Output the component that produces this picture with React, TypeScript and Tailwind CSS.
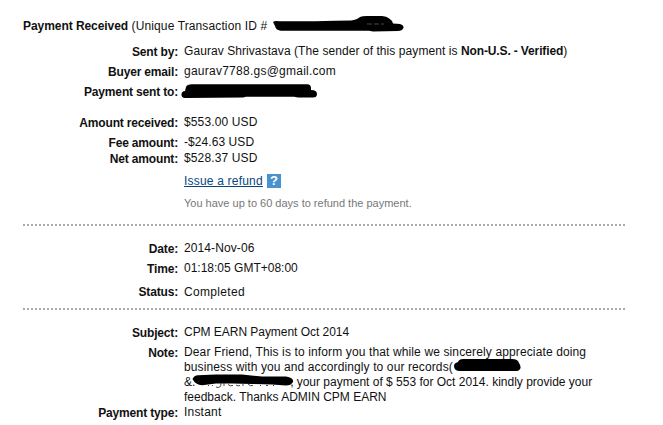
import type { ReactNode } from "react";

type RowProps = {
  label: string;
  className: string;
  labelClassName?: string;
  children: ReactNode;
};

function Row({ label, className, labelClassName = "pt-px", children }: RowProps) {
  return (
    <div className={`flex ${className}`}>
      <dt
        className={`w-[155px] shrink-0 text-right font-bold tracking-[-0.17px] ${labelClassName}`}
      >
        {label}
      </dt>
      <dd className="ml-[6px] min-h-[15px]">{children}</dd>
    </div>
  );
}

function Divider({ className }: { className: string }) {
  return (
    <div
      className={`h-[2px] w-[602px] bg-[repeating-linear-gradient(90deg,#aaaaaa_0_2px,transparent_2px_4px)] ${className}`}
    />
  );
}

type MarkerProps = {
  d: string;
  className: string;
  children?: ReactNode;
};

// Marker stroke drawn over private details
function Marker({ d, className, children }: MarkerProps) {
  return (
    <svg className={`absolute overflow-visible ${className}`} fill="#000">
      <path d={d} />
      {children}
    </svg>
  );
}

export default function App() {
  return (
    <main className="h-[425px] w-[663px] overflow-hidden bg-white pl-[23px] pt-[19px] font-['Liberation_Sans',Arial,sans-serif] text-[12px] leading-[15px] whitespace-nowrap text-[#111]">
      <h1 className="relative h-[15px]">
        <strong className="tracking-[-0.06px]">Payment Received</strong>
        <span className="tracking-[0.12px]"> (Unique Transaction ID #</span>
        <Marker
          className="top-[-3px] left-[250px] h-[18px] w-[132px]"
          d="M0 6Q2 4.5 6 5.3L42 5.2L62 4.7L78 4.4Q84 3.8 87 1Q89 0 94 0L109 0Q118 1 120 7.5L127 8Q131 9 130.500 12Q129 15 125 15L100 15.500L96 14.700L8 14.700Q3 14.500 2 10Z"
        >
          <path d="M94 8H99M101 8H106M108 8H111" stroke="#777" strokeWidth="0.6" />
        </Marker>
      </h1>

      <dl>
        <Row label="Sent by:" className="mt-[10px] h-[15px]">
          <span className="tracking-[0.07px]">
            Gaurav Shrivastava (The sender of this payment is{" "}
          </span>
          <strong className="tracking-[-0.13px]">Non-U.S. - Verified</strong>)
        </Row>
        <Row label="Buyer email:" className="mt-[5px] h-[15px]">
          <span className="tracking-[0.25px]">gaurav7788.gs@gmail.com</span>
        </Row>
        <Row label="Payment sent to:" className="relative mt-[5px] h-[15px]">
          <Marker
            className="top-[-1px] left-[158px] h-[16px] w-[138px]"
            d="M5 4Q6 1.300 11 1.300L126 1.300Q130 1.500 130 5L130 7Q136 7 136 11Q136 14.500 132 14.500L117 14.500L113 13.800L65 13.800L62 14.500L4 15Q0 14.500 0.500 11Q1 8 4 8Z"
          />
        </Row>
        <Row label="Amount received:" className="mt-[16px] h-[15px]">
          <span className="tracking-[0.13px]">$553.00 USD</span>
        </Row>
        <Row label="Fee amount:" className="mt-[5px] h-[15px]">
          <span className="tracking-[0.07px]">-$24.63 USD</span>
        </Row>
        <Row label="Net amount:" className="mt-px h-[15px]">
          <span className="tracking-[0.13px]">$528.37 USD</span>
        </Row>
      </dl>

      <div className="mt-[8px] ml-[161px] flex h-[15px]">
        <a href="#refund" className="tracking-[0.2px] text-[#084482] underline">
          Issue a refund
        </a>
        <span className="ml-[4px] flex size-[14px] items-center justify-center bg-[#4a91d0] text-[13px] leading-[14px] font-bold text-white">
          ?
        </span>
      </div>
      <p className="mt-[7px] ml-[161px] h-[15px] text-[11px] text-[#777]">
        You have up to 60 days to refund the payment.
      </p>

      <Divider className="mt-[13px]" />

      <dl>
        <Row label="Date:" className="mt-[15px] h-[15px]">
          <span className="tracking-[0.1px]">2014-Nov-06</span>
        </Row>
        <Row label="Time:" className="mt-[5px] h-[15px]">
          01:18:05 GMT+08:00
        </Row>
        <Row label="Status:" className="mt-[9px] h-[15px]" labelClassName="pt-0">
          <span className="tracking-[0.33px]">Completed</span>
        </Row>
      </dl>

      <Divider className="mt-[8px]" />

      <dl>
        <Row label="Subject:" className="mt-[15px] h-[15px]">
          <span className="tracking-[-0.04px]">CPM EARN Payment Oct 2014</span>
        </Row>
        <Row label="Note:" className="relative mt-[5px] h-[60px]">
          <div className="tracking-[0.127px]">
            Dear Friend, This is to inform you that while we sincerely appreciate doing
          </div>
          <div className="tracking-[0.11px]">
            business with you and accordingly to our records(
          </div>
          <div>
            &amp;.
            <span className="ml-[95px]">,</span>
            <span className="ml-[3px]">your payment of $ 553 for Oct 2014. kindly provide your</span>
          </div>
          <div>feedback. Thanks ADMIN CPM EARN</div>
          <Marker
            className="top-[14px] left-[431px] h-[14px] w-[68px]"
            d="M0 7Q0 4 4 3Q5 0 9 0L58 0Q64 0 65 4Q69 10 63 12L6 12Q0 12 0 7Z"
          />
          <Marker
            className="top-[29px] left-[169px] h-[14px] w-[102px]"
            d="M0.500 5Q2 1.500 6 1.200L24 0.500L50 0.500L70 2.500L94 2.500Q102 4 101 8Q99 11.500 94 11.500L80 10.500L60 10L40 9.500L24 9.500L12 11Q4 12 0.500 5Z"
          >
            <path
              d="M16 11.500H17M20 11.500H21M24 13Q29 15 29 9M32 9V12M36 10.500Q38 12.500 41 11.500M44 11Q46 12.500 48 11.500M51 9V12M56 10Q58 12.500 61 11.500M68 11.500H69M74 11.500H76M81 11.500H82"
              fill="none"
              stroke="#333"
              strokeWidth="0.9"
            />
          </Marker>
        </Row>
        <Row label="Payment type:" className="h-[15px]">
          <span className="tracking-[0.2px]">Instant</span>
        </Row>
      </dl>
    </main>
  );
}
